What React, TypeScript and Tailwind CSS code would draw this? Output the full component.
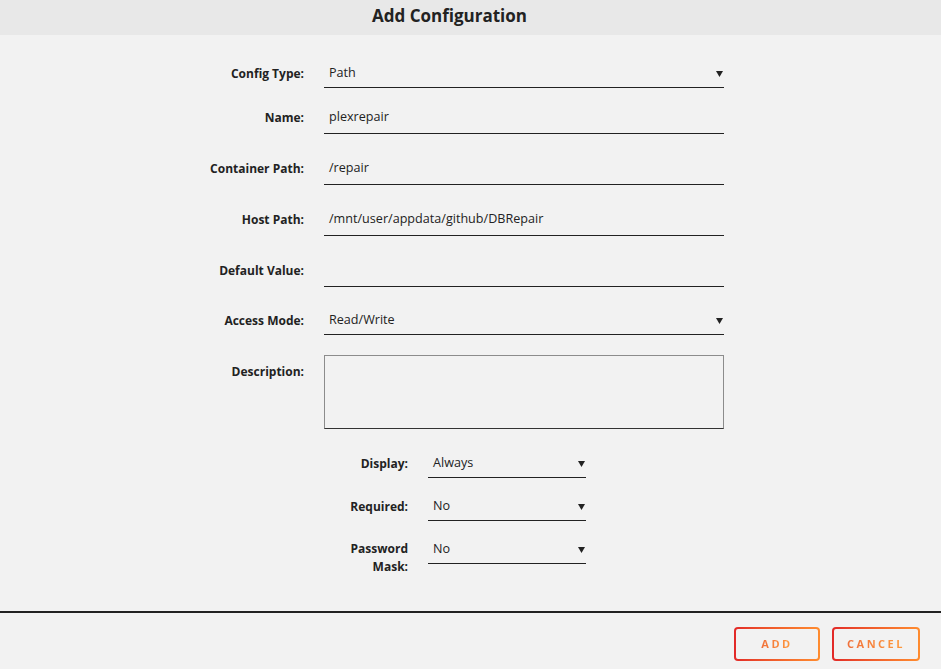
import React from "react";

const FONT = { fontFamily: '"Open Sans", "Noto Sans", sans-serif' };

function Arrow() {
  return (
    <svg width="7" height="6" viewBox="0 0 7 6" className="shrink-0">
      <path d="M0 0 H7 L3.5 6 Z" fill="#222" />
    </svg>
  );
}

function Row({
  label,
  children,
  className = "",
  labelClass = "pt-[7px]",
}: {
  label: React.ReactNode;
  children: React.ReactNode;
  className?: string;
  labelClass?: string;
}) {
  return (
    <div className={`flex items-start ${className}`}>
      <div className={`w-[120px] shrink-0 text-right text-[12px] font-bold leading-[17px] text-[#222] ${labelClass}`}>
        {label}
      </div>
      <div className="ml-[20px]">{children}</div>
    </div>
  );
}

function Field({ value = "", select = false, w = "w-[400px]" }: { value?: string; select?: boolean; w?: string }) {
  return (
    <div
      className={`flex h-[30px] items-center justify-between border-b border-[#222] pl-[5px] pr-[1px] ${select ? "pt-[2px]" : "pb-[2px]"} ${w}`}
    >
      <span className="text-[12.6px] text-[#222]">{value}</span>
      {select && <Arrow />}
    </div>
  );
}

export default function App() {
  return (
    <div className="flex h-[669px] w-[941px] flex-col bg-[#f2f2f2]" style={FONT}>
      <div className="flex h-[35px] items-center justify-center bg-[#e8e8e8] pb-[3px] pr-[42px]">
        <h1 className="text-[17px] font-bold text-[#222]">Add Configuration</h1>
      </div>

      <div className="flex flex-1 flex-col pl-[184px] pt-[23px]">
        <Row label="Config Type:" labelClass="pt-[7px]">
          <Field value="Path" select />
        </Row>
        <Row label="Name:" className="mt-[16px]" labelClass="pt-[5px]">
          <Field value="plexrepair" />
        </Row>
        <Row label="Container Path:" className="mt-[21px]" labelClass="pt-[5px]">
          <Field value="/repair" />
        </Row>
        <Row label="Host Path:" className="mt-[21px]" labelClass="pt-[5px]">
          <Field value="/mnt/user/appdata/github/DBRepair" />
        </Row>
        <Row label="Default Value:" className="mt-[21px]" labelClass="pt-[5px]">
          <Field />
        </Row>
        <Row label="Access Mode:" className="mt-[18px]" labelClass="pt-[7px]">
          <Field value="Read/Write" select />
        </Row>
        <Row label="Description:" className="mt-[20px]" labelClass="pt-[8px]">
          <div className="h-[74px] w-[400px] border border-[#8c8c8c] border-b-[#333]" />
        </Row>

        <div className="ml-[104px] flex flex-col">
          <Row label="Display:" className="mt-[19px]" labelClass="pt-[7px]">
            <Field value="Always" select w="w-[158px]" />
          </Row>
          <Row label="Required:" className="mt-[13px]" labelClass="pt-[7px]">
            <Field value="No" select w="w-[158px]" />
          </Row>
          <Row label={<>Password<br />Mask:</>} className="mt-[13px]" labelClass="pt-[6px] leading-[18px]">
            <Field value="No" select w="w-[158px]" />
          </Row>
        </div>
      </div>

      <div className="h-[2px] bg-[#222]" />
      <div className="flex h-[56px] items-start justify-end gap-[12px] pr-[21px] pt-[14px]">
        {["ADD", "CANCEL"].map((t) => (
          <div
            key={t}
            className="rounded-[4px] bg-gradient-to-r from-[#e22828] to-[#ff8c2f] p-[2px]"
          >
            <div
              className={`flex h-[30px] items-center justify-center rounded-[2px] bg-[#f2f2f2] ${t === "ADD" ? "w-[82px]" : "w-[84px]"}`}
            >
              <span className="bg-gradient-to-r from-[#f0703a] to-[#ff9a3c] bg-clip-text text-[11px] font-bold tracking-[2.5px] text-transparent">
                {t}
              </span>
            </div>
          </div>
        ))}
      </div>
    </div>
  );
}
